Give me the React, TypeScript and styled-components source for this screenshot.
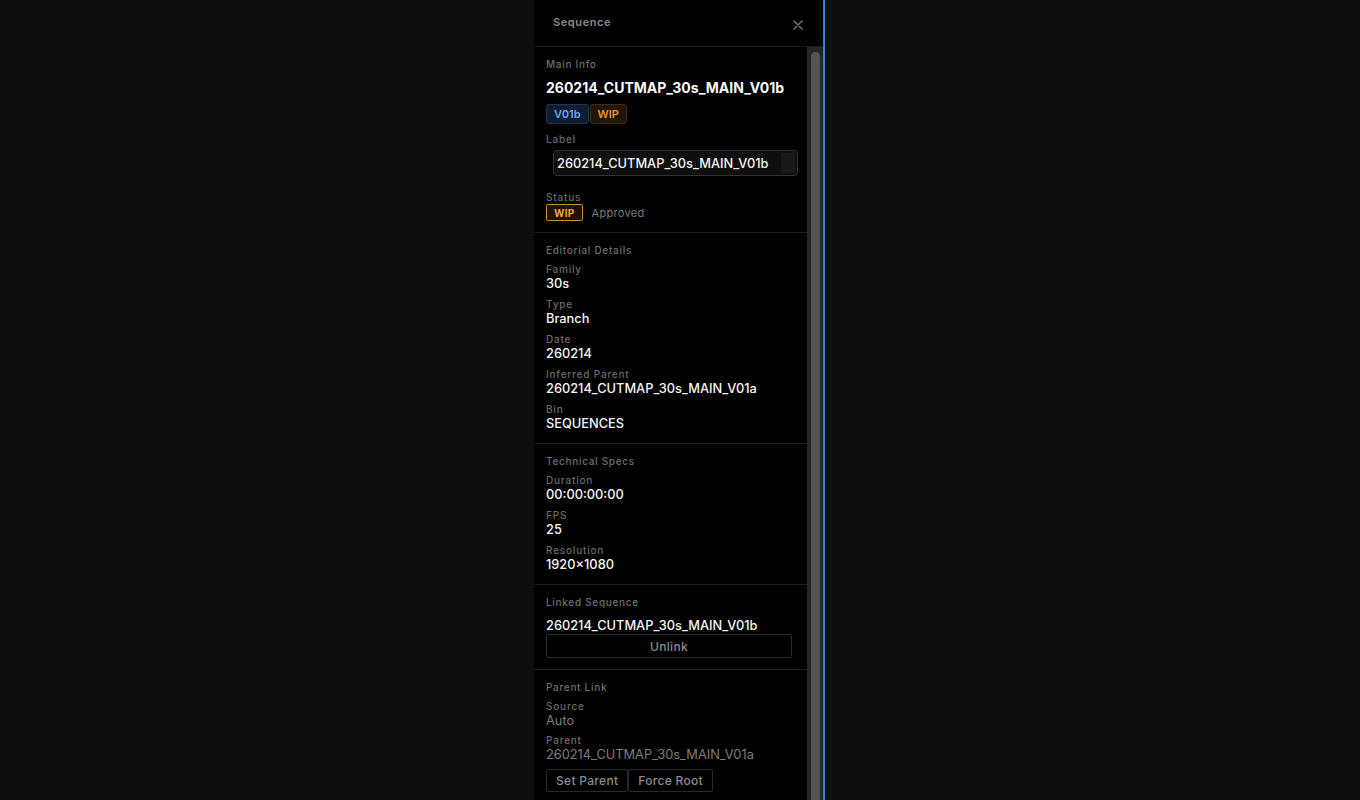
import React from "react";
import styled, { createGlobalStyle } from "styled-components";

const GlobalStyle = createGlobalStyle`
    html, body {
        margin: 0;
        padding: 0;
        background: #0e0e10;
        font-family: Inter, "Noto Sans", "Liberation Sans", sans-serif;
        -webkit-font-smoothing: antialiased;
    }
    #root {
        height: 800px;
    }
`

type FieldData = { label: string, value: string }

const editorial: FieldData[] = [
    { label: 'Family', value: '30s' },
    { label: 'Type', value: 'Branch' },
    { label: 'Date', value: '260214' },
    { label: 'Inferred Parent', value: '260214_CUTMAP_30s_MAIN_V01a' },
    { label: 'Bin', value: 'SEQUENCES' },
]

const technical: FieldData[] = [
    { label: 'Duration', value: '00:00:00:00' },
    { label: 'FPS', value: '25' },
    { label: 'Resolution', value: '1920×1080' },
]

const parentLink: FieldData[] = [
    { label: 'Source', value: 'Auto' },
    { label: 'Parent', value: '260214_CUTMAP_30s_MAIN_V01a' },
]

function Field({ label, value, muted }: FieldData & { muted?: boolean }) {
    return (
        <FieldWrap>
            <FieldLabel>{label}</FieldLabel>
            <FieldValue muted={muted}>{value}</FieldValue>
        </FieldWrap>
    )
}

export default function App() {
    return (
        <>
            <GlobalStyle />
            <Page>
                <Panel>
                    <PanelHeader>
                        <PanelTitle>Sequence</PanelTitle>
                        <CloseButton aria-label="close">
                            <svg width="10" height="10" viewBox="0 0 10 10">
                                <path d="M1 1 L9 9 M9 1 L1 9" stroke="#7a7a7a" strokeWidth="1.3" strokeLinecap="round" />
                            </svg>
                        </CloseButton>
                    </PanelHeader>

                    <Body>
                        <Content>
                            <Section>
                                <SectionTitle>Main Info</SectionTitle>
                                <SeqName>260214_CUTMAP_30s_MAIN_V01b</SeqName>
                                <BadgeRow>
                                    <Badge tone="blue">V01b</Badge>
                                    <Badge tone="amber">WIP</Badge>
                                </BadgeRow>
                                <FieldLabel className="label-top">Label</FieldLabel>
                                <LabelInput>
                                    <span>260214_CUTMAP_30s_MAIN_V01b</span>
                                    <i />
                                </LabelInput>
                                <FieldLabel className="status-top">Status</FieldLabel>
                                <StatusRow>
                                    <StatusButton active>WIP</StatusButton>
                                    <StatusButton>Approved</StatusButton>
                                </StatusRow>
                            </Section>

                            <Section>
                                <SectionTitle>Editorial Details</SectionTitle>
                                <FieldList>
                                    {editorial.map(f => <Field key={f.label} {...f} />)}
                                </FieldList>
                            </Section>

                            <Section>
                                <SectionTitle>Technical Specs</SectionTitle>
                                <FieldList>
                                    {technical.map(f => <Field key={f.label} {...f} />)}
                                </FieldList>
                            </Section>

                            <Section>
                                <SectionTitle>Linked Sequence</SectionTitle>
                                <LinkedName>260214_CUTMAP_30s_MAIN_V01b</LinkedName>
                                <GhostButton wide>Unlink</GhostButton>
                            </Section>

                            <Section last>
                                <SectionTitle>Parent Link</SectionTitle>
                                <FieldList tight>
                                    {parentLink.map(f => <Field key={f.label} {...f} muted />)}
                                </FieldList>
                                <ButtonRow>
                                    <GhostButton>Set Parent</GhostButton>
                                    <GhostButton>Force Root</GhostButton>
                                </ButtonRow>
                            </Section>
                        </Content>

                        {/* scroll rail, drawn since the window hides native bars */}
                        <ScrollTrack>
                            <ScrollThumb />
                        </ScrollTrack>
                    </Body>
                </Panel>
            </Page>
        </>
    )
}

const Page = styled.div`
    height: 800px;
    display: flex;
    justify-content: center;
    background: #0e0e10;
`

const Panel = styled.aside`
    width: 289px;
    height: 800px;
    display: flex;
    flex-direction: column;
    background: #000;
    border-right: 2px solid #3b7fd4;
    box-sizing: content-box;
    margin-right: 1px;
`

const PanelHeader = styled.header`
    height: 46px;
    flex-shrink: 0;
    display: flex;
    align-items: center;
    justify-content: space-between;
    padding: 0 18px 0 19px;
    border-bottom: 1px solid #1e1e1e;
`

const PanelTitle = styled.h2`
    margin: 0 0 2px;
    font-size: 11px;
    font-weight: 600;
    letter-spacing: 0.6px;
    color: #8a8a8a;
`

const CloseButton = styled.button`
    width: 14px;
    height: 14px;
    padding: 0;
    margin-top: 4px;
    border: 0;
    background: none;
    display: flex;
    align-items: center;
    justify-content: center;
`

const Body = styled.div`
    flex: 1;
    min-height: 0;
    display: flex;
    overflow: hidden;
`

const Content = styled.div`
    flex: 1;
    min-width: 0;
`

const ScrollTrack = styled.div`
    width: 16px;
    flex-shrink: 0;
    display: flex;
    justify-content: center;
    padding-top: 5px;
    background: #262626;
`

const ScrollThumb = styled.div`
    width: 9px;
    height: 760px;
    border-radius: 5px;
    background: #555;
`

const Section = styled.section<{ last?: boolean }>`
    display: flex;
    flex-direction: column;
    align-items: flex-start;
    padding: 10px 12px ${props => props.last ? '20px' : '11px'};
    border-bottom: ${props => props.last ? 'none' : '1px solid #1f1f1f'};

    .label-top {
        margin-top: 9px;
    }
    .status-top {
        margin-top: 15px;
    }
`

const SectionTitle = styled.h3`
    margin: 0;
    font-size: 10px;
    line-height: 14px;
    font-weight: 500;
    letter-spacing: 0.7px;
    color: #6e6e6e;
`

const SeqName = styled.h1`
    margin: 7px 0 0;
    font-size: 14px;
    line-height: 20px;
    font-weight: 700;
    color: #fafafa;
`

const BadgeRow = styled.div`
    display: flex;
    gap: 1px;
    margin-top: 6px;
`

const Badge = styled.span<{ tone: 'blue' | 'amber' }>`
    height: 20px;
    padding: 0 7px;
    box-sizing: border-box;
    display: flex;
    align-items: center;
    border-radius: 3px;
    font-size: 11px;
    font-weight: 600;
    border: 1px solid ${props => props.tone === 'blue' ? '#1e3658' : '#3f2d10'};
    background: ${props => props.tone === 'blue' ? '#0f1d31' : '#1f1608'};
    color: ${props => props.tone === 'blue' ? '#6aa6e8' : '#e09a2c'};
`

const FieldList = styled.div<{ tight?: boolean }>`
    display: flex;
    flex-direction: column;
    gap: ${props => props.tight ? '5px' : '6px'};
    margin-top: 6px;
`

const FieldWrap = styled.div`
    display: flex;
    flex-direction: column;
`

const FieldLabel = styled.span`
    font-size: 10px;
    line-height: 13px;
    font-weight: 500;
    letter-spacing: 0.8px;
    color: #6a6a6a;
`

const FieldValue = styled.span<{ muted?: boolean }>`
    font-size: 12.8px;
    line-height: 16px;
    font-weight: ${props => props.muted ? 400 : 500};
    color: ${props => props.muted ? '#7c7c7c' : '#f6f6f6'};
`

const LabelInput = styled.div`
    width: 245px;
    height: 26px;
    margin: 4px 0 0 7px;
    box-sizing: border-box;
    display: flex;
    align-items: center;
    justify-content: space-between;
    padding: 0 2px 0 3px;
    border: 1px solid #323232;
    border-radius: 4px;
    background: #0f0f0f;

    span {
        font-size: 12.8px;
        font-weight: 500;
        color: #f4f4f4;
    }
    i {
        width: 14px;
        height: 20px;
        background: #191919;
    }
`

const StatusRow = styled.div`
    display: flex;
    align-items: center;
    gap: 6px;
`

const StatusButton = styled.button<{ active?: boolean }>`
    height: 17px;
    padding: 0 ${props => props.active ? '7px' : '2px'};
    display: flex;
    align-items: center;
    font-family: inherit;
    font-size: ${props => props.active ? '10px' : '11px'};
    font-weight: ${props => props.active ? 700 : 400};
    letter-spacing: 0.3px;
    border-radius: 2px;
    border: ${props => props.active ? '1.5px solid #d08b22' : '1px solid transparent'};
    background: ${props => props.active ? '#1c1308' : 'transparent'};
    color: ${props => props.active ? '#eea53a' : '#7a7a7a'};
`

const LinkedName = styled.div`
    margin-top: 9px;
    font-size: 12.8px;
    line-height: 16px;
    font-weight: 500;
    color: #f6f6f6;
`

const GhostButton = styled.button<{ wide?: boolean }>`
    height: ${props => props.wide ? '24px' : '23px'};
    width: ${props => props.wide ? '246px' : 'auto'};
    padding: 0 9px;
    box-sizing: border-box;
    font-family: inherit;
    font-size: 12px;
    font-weight: 500;
    letter-spacing: 0.3px;
    color: #8c8c8c;
    background: #000;
    border: 1px solid #2a2a2a;
    border-radius: 2px;
`

const ButtonRow = styled.div`
    display: flex;
    margin-top: 6px;
`
